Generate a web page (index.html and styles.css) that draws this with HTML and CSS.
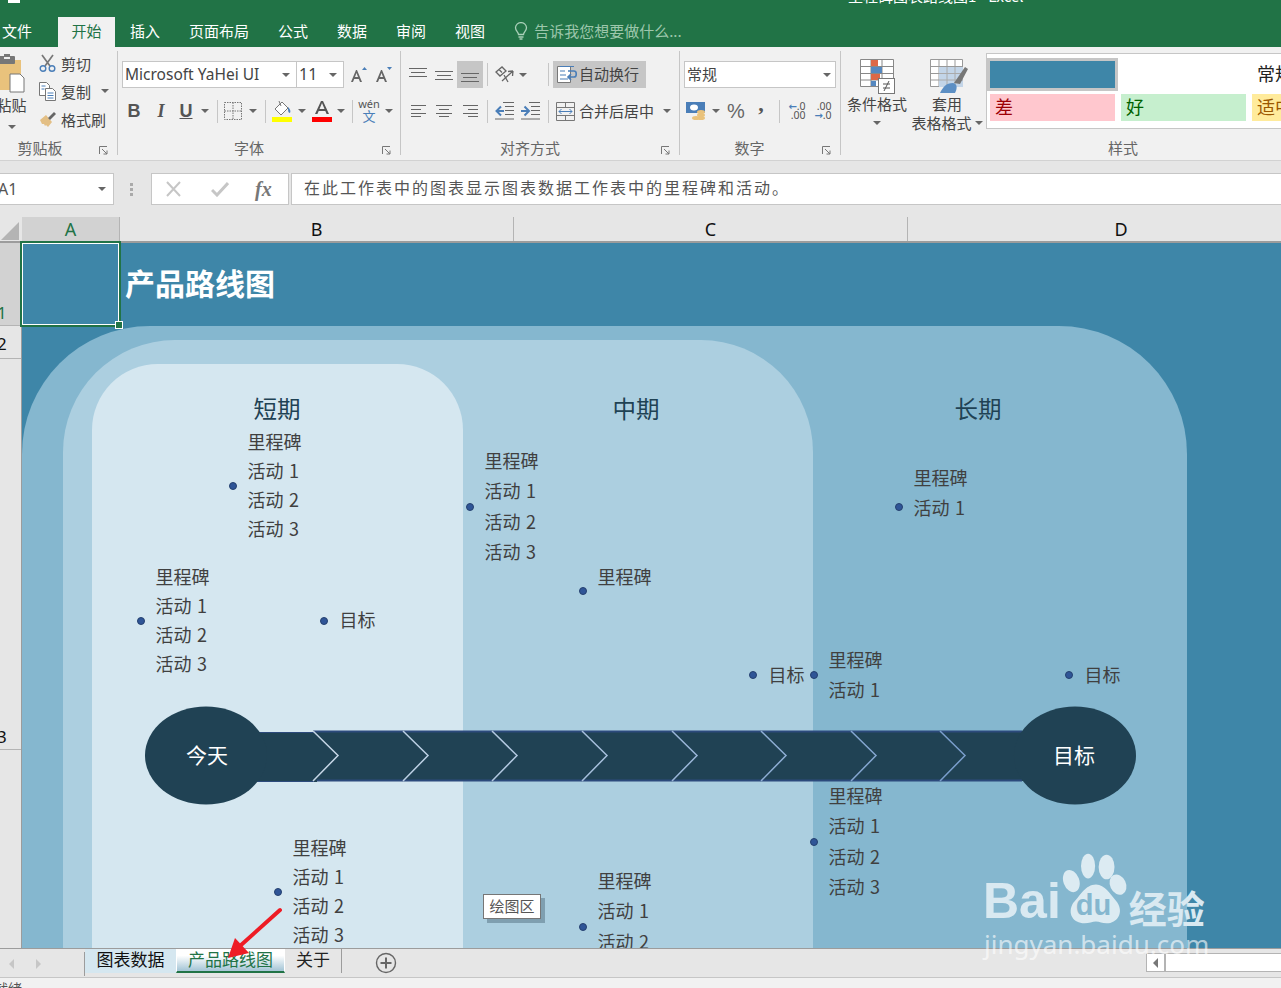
FILE: index.html
```html
<!DOCTYPE html>
<html lang="zh-CN">
<head>
<meta charset="utf-8">
<title>产品路线图 - Excel</title>
<link rel="stylesheet" href="styles.css">
</head>
<body>
<div class="app">
  <header class="titlebar"><span class="qa"></span><span class="doc-title">里程碑图表路线图1 - Excel</span></header>
  <nav class="tabs">
    <span class="tab file">文件</span><span class="tab on">开始</span><span class="tab">插入</span><span class="tab">页面布局</span><span class="tab">公式</span><span class="tab">数据</span><span class="tab">审阅</span><span class="tab">视图</span>
    <span class="tell">
      <svg width="14" height="18" viewBox="0 0 14 18" fill="none" stroke="#a9d0b8" stroke-width="1.3"><path d="M4.5 12.5C4.5 10 1.5 9 1.5 5.8a5.5 5.2 0 0 1 11 0C12.500 9 9.500 10 9.500 12.500z"/><path d="M4.500 15h5M5.500 17h3"/></svg>
      告诉我您想要做什么...
    </span>
  </nav>

  <section class="ribbon">
    <div class="group g-clip">
      <div class="clip-body">
        <div class="paste">
          <svg width="35" height="40" viewBox="0 0 35 40"><rect x="0" y="6" width="27" height="30" fill="#e9c27c"/><rect x="5" y="2" width="16" height="8" rx="1" fill="#777"/><rect x="10" y="0" width="6" height="4" fill="#777"/><rect x="10" y="3" width="6" height="2" fill="#eee"/><path d="M16 20h10l4 4v14H16z" fill="#fff" stroke="#777"/></svg>
          <span class="paste-t">粘贴</span>
          <i class="caret"></i>
        </div>
        <div class="clip-list">
          <div class="clip-row">
            <svg width="17" height="19" viewBox="0 0 17 19" fill="none"><path d="M3 1l8 11M14 1L6 12" stroke="#777" stroke-width="1.700"/><circle cx="4" cy="14.500" r="2.800" stroke="#4a7eb8" stroke-width="1.400"/><circle cx="13" cy="14.500" r="2.800" stroke="#4a7eb8" stroke-width="1.400"/></svg>
            <span class="clip-t">剪切</span>
          </div>
          <div class="clip-row">
            <svg width="17" height="19" viewBox="0 0 17 19" fill="#fff" stroke="#777"><path d="M.5.500h7l3 3v10H.5z"/><path d="M6.500 6.500h7l3 3v9h-10z"/><path d="M2.500 4h4M2.500 7h3M8.500 11h6M8.500 13.500h6M8.500 16h6" stroke="#4a7eb8"/></svg>
            <span class="clip-t">复制</span><i class="caret"></i>
          </div>
          <div class="clip-row">
            <svg width="17" height="17" viewBox="0 0 17 17"><path d="M1 9l6-5 6 7-4 5-2-2-1 1-1-2-2 0-1-2z" fill="#e3bf85"/><path d="M9 7l6-6 2 2-6 6z" fill="#666"/></svg>
            <span class="clip-t">格式刷</span>
          </div>
        </div>
      </div>
      <div class="glabel">剪贴板</div>
      <svg class="launch" width="9" height="9" viewBox="0 0 9 9" fill="none" stroke="#777"><path d="M.5 8V.5H8M3 3l5 5M8 4.500V8H4.500"/></svg>
    </div>

    <div class="group g-font">
      <div class="row1 font-r1">
        <span class="select fontname">Microsoft YaHei UI<i class="caret"></i></span>
        <span class="select fontsize">11<i class="caret"></i></span>
        <svg width="18" height="20" viewBox="0 0 18 20"><path d="M1 17L6 5h1l5 12h-2l-1.200-3H4.200L3 17zm4-5h3L6.500 8z" fill="#666"/><path d="M12 5l2.500-3L17 5z" fill="#4a7eb8"/></svg>
        <svg width="18" height="20" viewBox="0 0 18 20"><path d="M1 17L6 5h1l5 12h-2l-1.200-3H4.200L3 17zm4-5h3L6.500 8z" fill="#666"/><path d="M12 2h5l-2.500 3z" fill="#4a7eb8"/></svg>
      </div>
      <div class="row2 font-r2">
        <b class="fmt">B</b><i class="fmt">I</i><u class="fmt">U</u><i class="caret"></i><span class="sep"></span>
        <svg width="18" height="18" viewBox="0 0 18 18" fill="none" stroke="#777" stroke-dasharray="1.500 1"><path d="M.5.500h17v17H.5zM9 .5v17M.5 9h17"/></svg>
        <i class="caret"></i><span class="sep"></span>
        <svg width="20" height="23" viewBox="0 0 20 23"><path d="M3 9l7-7 6 6-7 7z" fill="#fff" stroke="#777"/><path d="M7 1l2 5" stroke="#777"/><path d="M16 7c2 2 3 4 2 6-2 0-2-3-2-6z" fill="#4a7eb8"/><rect y="17" width="20" height="5" fill="#ff0"/></svg>
        <i class="caret"></i>
        <svg width="20" height="23" viewBox="0 0 20 23"><path d="M3 14L9 1h2l6 13h-2.400l-1.300-3H6.700l-1.300 3zm4.500-5h5L10 3z" fill="#555"/><rect y="17" width="20" height="5" fill="#f00"/></svg>
        <i class="caret"></i><span class="sep"></span>
        <span class="wen"><span class="wen-a">wén</span><span class="wen-b">文</span></span>
        <i class="caret"></i>
      </div>
      <div class="glabel">字体</div>
      <svg class="launch" width="9" height="9" viewBox="0 0 9 9" fill="none" stroke="#777"><path d="M.5 8V.5H8M3 3l5 5M8 4.500V8H4.500"/></svg>
    </div>

    <div class="group g-align">
      <div class="row1 align-r1">
        <svg width="18" height="14" viewBox="0 0 18 14" stroke="#666"><path d="M0 .5h18M2 4.500h14M0 8.500h18"/></svg>
        <svg width="18" height="14" viewBox="0 0 18 14" stroke="#666"><path d="M0 3.500h18M2 7.500h14M0 11.500h18"/></svg>
        <span class="active-ic"><svg width="18" height="14" viewBox="0 0 18 14" stroke="#666"><path d="M0 5.500h18M2 9.500h14M0 13.500h18"/></svg></span>
        <span class="sep"></span>
        <svg width="20" height="19" viewBox="0 0 20 19" fill="none" stroke="#666" stroke-width="1.300"><path d="M1 7l6-5 4 4-6 5zM4 4.500l3 3M7 16L18 6M18 6l-5 .5M18 6l-.5 5"/><path d="M9 10l4 7" /></svg>
        <i class="caret"></i>
        <span></span><span class="sep"></span><span></span>
        <span class="btn-active"><svg width="20" height="19" viewBox="0 0 20 19" fill="none"><path d="M.5 1.500h13v16H.5z" fill="#fff" stroke="#777"/><path d="M3 1.500h14M3 6h5M3 10h6M3 14h8" stroke="#4a7eb8" stroke-width="1.200"/><path d="M11 6h6c3 0 3 6 0 6h-5M14 9l-3 3 3 3" stroke="#4a7eb8" stroke-width="1.600"/></svg><span class="btn-t">自动换行</span></span>
      </div>
      <div class="row2 align-r2">
        <svg width="15" height="12" viewBox="0 0 15 12" stroke="#666"><path d="M0 .5h15M0 4.500h10M0 8.500h15M0 11.500h10"/></svg>
        <svg width="16" height="12" viewBox="0 0 16 12" stroke="#666"><path d="M0 .5h16M3 4.500h10M0 8.500h16M3 11.500h10"/></svg>
        <svg width="15" height="12" viewBox="0 0 15 12" stroke="#666"><path d="M0 .5h15M5 4.500h10M0 8.500h15M5 11.500h10"/></svg>
        <span class="sep"></span>
        <svg width="19" height="18" viewBox="0 0 19 18" fill="none"><path d="M8 .5h11M10 4.500h9M10 8.500h9M10 12.500h9M0 17h19" stroke="#666"/><path d="M9 9H2M6 4.500L1.500 9 6 13.500" stroke="#4a7eb8" stroke-width="2"/></svg>
        <svg width="19" height="18" viewBox="0 0 19 18" fill="none"><path d="M8 .5h11M10 4.500h9M10 8.500h9M10 12.500h9M0 17h19" stroke="#666"/><path d="M0 9h7M3.500 4.500L8 9l-4.500 4.500" stroke="#4a7eb8" stroke-width="2"/></svg>
        <span></span><span class="sep"></span>
        <span class="merge"><svg width="19" height="19" viewBox="0 0 19 19" fill="none"><path d="M.5.500h18v18H.5zM.5 5.500h18M.5 13.500h18M9.500.5v5M9.500 13.500v5" stroke="#777"/><path d="M3 9.500h13M5.500 7L3 9.500 5.500 12M13.500 7L16 9.500 13.500 12" stroke="#4a7eb8"/></svg><span class="merge-t">合并后居中</span><i class="caret"></i></span>
      </div>
      <div class="glabel">对齐方式</div>
      <svg class="launch" width="9" height="9" viewBox="0 0 9 9" fill="none" stroke="#777"><path d="M.5 8V.5H8M3 3l5 5M8 4.500V8H4.500"/></svg>
    </div>

    <div class="group g-num">
      <div class="row1 num-r1"><span class="select numfmt">常规<i class="caret"></i></span></div>
      <div class="row2 num-r2">
        <svg width="20" height="20" viewBox="0 0 20 20"><rect y="1" width="19" height="11" fill="#4a7eb8"/><ellipse cx="8" cy="6.500" rx="4" ry="3" fill="#fff"/><ellipse cx="15" cy="11" rx="4" ry="2" fill="#e9c27c"/><ellipse cx="15" cy="14" rx="4" ry="2" fill="#e9c27c"/><ellipse cx="10" cy="17" rx="4" ry="2" fill="#e9c27c"/><ellipse cx="15" cy="17" rx="4" ry="2" fill="#e9c27c"/></svg>
        <i class="caret"></i>
        <span class="pct">%</span>
        <span class="comma">,</span>
        <span class="sep"></span>
        <span class="dec"><span><em class="arr">←</em>.0</span><span>.00</span></span>
        <span class="dec"><span>.00</span><span><em class="arr">→</em>.0</span></span>
      </div>
      <div class="glabel">数字</div>
      <svg class="launch" width="9" height="9" viewBox="0 0 9 9" fill="none" stroke="#777"><path d="M.5 8V.5H8M3 3l5 5M8 4.500V8H4.500"/></svg>
    </div>

    <div class="group g-style">
      <div class="style-body">
        <div class="big cond">
          <svg width="35" height="35" viewBox="0 0 35 35"><path d="M.5.500h33v27H.5zM11 .5v27M22 .5v27M.5 7.500h33M.5 14.500h33M.5 21h33" fill="#fff" stroke="#888"/><rect x="11" y="1" width="7" height="6" fill="#dd6846"/><rect x="11" y="8" width="11" height="6" fill="#5588c0"/><rect x="11" y="15" width="9" height="6" fill="#dd6846"/><rect x="11" y="22" width="5" height="5" fill="#5588c0"/><rect x="18.500" y="19.500" width="16" height="15" fill="#fff" stroke="#777"/><path d="M23 25h7M23 29h7M29 22l-5 10" stroke="#555" fill="none"/></svg>
          <span class="big-t">条件格式</span>
          <i class="caret"></i>
        </div>
        <div class="big table">
          <svg width="38" height="35" viewBox="0 0 38 35"><path d="M.5.500h32v27H.5zM9 .5v27M17 .5v27M25 .5v27M.5 7.500h32M.5 14.500h32M.5 21h32" fill="#fff" stroke="#999"/><rect x="9" y="8" width="24" height="20" fill="#c3d5e8"/><path d="M9 14.500h24M9 21h24M17 8v20M25 8v20" stroke="#aaa"/><path d="M24 24L35 8l3 2-8 15z" fill="#777"/><path d="M10 34c3-6 6-10 13-10 5 1 4 6 2 10z" fill="#5c8fc4"/></svg>
          <span class="big-t">套用</span>
          <span class="big-t">表格格式<i class="caret"></i></span>
        </div>
        <div class="gallery">
          <span class="cell cell-sel"></span><span class="cell"></span><span class="cell c-normal">常规</span>
          <span class="cell c-bad">差</span><span class="cell c-good">好</span><span class="cell c-mid">适中</span>
        </div>
      </div>
      <div class="glabel">样式</div>
    </div>
  </section>

  <section class="formula">
    <span class="namebox">A1<i class="caret"></i></span>
    <span class="grip"></span>
    <span class="fxbox">
      <svg width="18" height="16" viewBox="0 0 18 16" fill="none" stroke="#c6c6c6" stroke-width="2"><path d="M2 1l13 14M15 1L2 15"/></svg>
      <svg width="18" height="16" viewBox="0 0 18 16" fill="none" stroke="#c6c6c6" stroke-width="3"><path d="M1 9l5 5L17 2"/></svg>
      <em class="fx">fx</em>
    </span>
    <span class="fbar">在此工作表中的图表显示图表数据工作表中的里程碑和活动。</span>
  </section>

  <div class="colhead">
    <span class="corner"><svg width="18" height="18" viewBox="0 0 18 18"><path d="M18 0v18H0z" fill="#b4b4b4"/></svg></span>
    <span class="col col-a">A</span><span class="col">B</span><span class="col">C</span><span class="col col-d">D</span>
  </div>

  <div class="sheet">
    <aside class="rowhead">
      <span class="rh rh1">1</span><span class="rh rh2">2</span><span class="rh rh3">3</span>
    </aside>
    <main class="canvas">
      <h1 class="title">产品路线图</h1>
      <div class="arch a-long"></div>
      <div class="arch a-mid"></div>
      <div class="arch a-short"></div>
      <h2 class="phase p1">短期</h2><h2 class="phase p2">中期</h2><h2 class="phase p3">长期</h2>

      <div class="node n1"><i class="dot"></i><div class="lines l29"><div>里程碑</div><div>活动 1</div><div>活动 2</div><div>活动 3</div></div></div>
      <div class="node n2"><i class="dot"></i><div class="lines l29"><div>里程碑</div><div>活动 1</div><div>活动 2</div><div>活动 3</div></div></div>
      <div class="node n3 wide"><i class="dot"></i><div class="lines l29"><div>目标</div></div></div>
      <div class="node n4"><i class="dot"></i><div class="lines l30"><div>里程碑</div><div>活动 1</div><div>活动 2</div><div>活动 3</div></div></div>
      <div class="node n5"><i class="dot"></i><div class="lines l30 raised"><div>里程碑</div></div></div>
      <div class="node n6 wide"><i class="dot"></i><div class="lines l30"><div>目标</div></div></div>
      <div class="node n7"><i class="dot"></i><div class="lines l30"><div>里程碑</div><div>活动 1</div></div></div>
      <div class="node n8"><i class="dot"></i><div class="lines l30"><div>里程碑</div><div>活动 1</div></div></div>
      <div class="node n9 wide"><i class="dot"></i><div class="lines l30"><div>目标</div></div></div>
      <div class="node n10"><i class="dot"></i><div class="lines l30"><div>里程碑</div><div>活动 1</div><div>活动 2</div><div>活动 3</div></div></div>
      <div class="node n11"><i class="dot"></i><div class="lines l29"><div>里程碑</div><div>活动 1</div><div>活动 2</div><div>活动 3</div></div></div>
      <div class="node n12"><i class="dot"></i><div class="lines l30"><div>里程碑</div><div>活动 1</div><div>活动 2</div><div>活动 3</div></div></div>

      <svg class="timeline" width="1259" height="120" viewBox="0 0 1259 120">
        <rect x="220" y="26" width="800" height="49" fill="#204254"/>
        <path d="M291 25.500H1000M291 74.500H1000" stroke="#2c4a7c" stroke-width="2"/>
        <rect x="220" y="27" width="75" height="49" fill="#204254"/>
        <path d="M220 26.500H292M220 75.500H292" stroke="#2c4a7c"/>
        <g fill="none" stroke-width="1.500">
          <path d="M291 25l25 24.500L291 75" stroke="#c6d6e6"/>
          <path d="M381 25l25 24.500L381 75" stroke="#bcd0e4"/>
          <path d="M470 25l25 24.500L470 75" stroke="#b2c8e0"/>
          <path d="M560 25l25 24.500L560 75" stroke="#a6bfdc"/>
          <path d="M650 25l25 24.500L650 75" stroke="#9ab6d8"/>
          <path d="M739 25l25 24.500L739 75" stroke="#8eaed4"/>
          <path d="M829 25l25 24.500L829 75" stroke="#84a6d0"/>
          <path d="M918 25l25 24.500L918 75" stroke="#7a9ecc"/>
        </g>
        <ellipse cx="184" cy="49.500" rx="61" ry="49" fill="#204254"/>
        <ellipse cx="1053" cy="49.500" rx="61" ry="49" fill="#204254"/>
        <text class="tl-text" x="185" y="57" text-anchor="middle">今天</text>
        <text class="tl-text" x="1052" y="57" text-anchor="middle">目标</text>
      </svg>

      <div class="tip">绘图区</div>
    </main>
  </div>

  <footer class="tabbar">
    <span class="nav"><i class="tri tri-l"></i><i class="tri tri-r"></i></span>
    <span class="sheet-tab st1">图表数据</span>
    <span class="sheet-tab st2">产品路线图</span>
    <span class="sheet-tab st3">关于</span>
    <span class="add"><svg width="22" height="22" viewBox="0 0 22 22" fill="none" stroke="#666" stroke-width="1.400"><circle cx="11" cy="11" r="9.500"/><path d="M11 5.500v11M5.500 11h11" stroke-width="2"/></svg></span>
    <span class="grip grip-b"></span>
    <span class="hscroll"><span class="hbtn"><i class="tri tri-l dark"></i></span><span class="htrack"></span></span>
  </footer>
  <div class="status">就绪</div>

  <div class="selected"></div>

  <svg class="arrow" width="70" height="60" viewBox="0 0 70 60"><path d="M58 5L18 41" stroke="#ee1c25" stroke-width="4" stroke-linecap="round"/><path d="M6 53l7-20 14 15z" fill="#ee1c25"/></svg>

  <div class="watermark">
    <div class="wm-top">
      <span class="wm-bai">Bai</span>
      <span class="wm-paw">
        <svg width="68" height="74" viewBox="0 0 76 84"><g fill="#dcebf2"><ellipse cx="10" cy="33" rx="9" ry="13" transform="rotate(-20 10 33)"/><ellipse cx="29" cy="16" rx="8" ry="14"/><ellipse cx="50" cy="17" rx="9" ry="14"/><ellipse cx="63" cy="37" rx="9" ry="12" transform="rotate(-25 63 37)"/><path d="M38 37c10 0 16 11 24 20 8 12 0 24-12 24-5 0-8-2-12-2s-8 2-13 2C12 81 5 70 12 58c8-8 14-21 26-21z"/></g></svg>
        <span class="wm-du">du</span>
      </span>
      <span class="wm-cn">经验</span>
    </div>
    <div class="wm-url">jingyan.baidu.com</div>
  </div>
</div>
</body>
</html>
```
FILE: styles.css
```css
* { box-sizing: border-box; }
html, body { margin: 0; padding: 0; }
body { width: 1281px; height: 988px; overflow: hidden; }
.app {
  position: relative; width: 1281px; height: 988px; overflow: hidden;
  display: flex; flex-direction: column;
  font-family: "Noto Sans CJK SC", "Noto Sans", sans-serif;
  font-size: 15px; color: #444; background: #e6e6e6;
}
em { font-style: normal; }

/* title + tabs */
.titlebar { height: 17px; flex: none; background: #217346; position: relative; overflow: hidden; display: flex; }
.qa { width: 12px; height: 3px; margin-left: 8px; background: #fff; }
.doc-title { margin-left: 828px; margin-top: -14px; line-height: 20px; font-size: 15px; color: #fff; white-space: nowrap; }
.tabs { height: 30px; flex: none; background: #217346; display: flex; align-items: stretch; gap: 1px; margin-left: -12px; color: #fff; font-size: 15px; line-height: 27px; }
.tab { padding: 0 14px; }
.tab.on { background: #f1f1f1; color: #217346; padding: 0 13.500px; margin-left: 11px; }
.tell { display: flex; align-items: center; gap: 6px; margin-left: 14px; color: #9dc7ac; line-height: 28px; height: 28px; }

/* ribbon */
.ribbon { height: 114px; flex: none; display: flex; align-items: flex-start; background: #f1f1f1; border-bottom: 1px solid #d2d2d2; overflow: hidden; }
.group { position: relative; height: 104px; margin-top: 4px; display: flex; flex-direction: column; border-right: 1px solid #c6c6c6; flex: none; }
.glabel { margin-top: auto; line-height: 14px; font-size: 15px; text-align: center; color: #666; padding-right: 24px; }
.launch { position: absolute; right: 9px; bottom: 0; }
.g-clip { width: 118px; }
.g-clip .glabel { padding-right: 37px; }
.g-font { width: 283px; padding-left: 4px; }
.g-align { width: 279px; padding-left: 4px; }
.g-num { width: 161px; padding-left: 3px; }
.g-style { width: 440px; border-right: 0; }
.g-style .glabel { padding: 0 0 0 124px; }
.caret { display: inline-block; width: 0; height: 0; border: 4px solid transparent; border-top-color: #666; border-bottom: 0; }
.sep { display: block; width: 1px; height: 23px; background: #c6c6c6; justify-self: center; }
.row1 { margin-top: 10px; height: 27px; display: grid; align-items: center; justify-items: center; }
.row2 { margin-top: 10px; height: 26px; display: grid; align-items: center; justify-items: center; }

/* clipboard */
.clip-body { display: flex; }
.paste { width: 31px; margin-left: -4px; margin-top: 3px; display: flex; flex-direction: column; align-items: center; flex: none; }
.paste-t { font-size: 15px; line-height: 20px; margin-top: 1px; white-space: nowrap; }
.paste .caret { margin-top: 10px; }
.clip-list { margin-left: 12px; margin-top: -2px; }
.clip-row { height: 28px; display: flex; align-items: center; gap: 5px; white-space: nowrap; }
.clip-row svg { flex: none; }
.clip-row .caret { margin-left: 5px; }
.clip-t { margin-top: 0; }

/* font group */
.font-r1 { grid-template-columns: 175px 47px 6px 18px 7px 18px; justify-items: stretch; }
.font-r1 svg:nth-of-type(1) { grid-column: 4; }
.font-r1 svg:nth-of-type(2) { grid-column: 6; }
.select { height: 27px; display: flex; align-items: center; justify-content: space-between; background: #fff; border: 1px solid #c6c6c6; padding: 0 6px 2px 2px; white-space: nowrap; color: #444; }
.select .caret { margin-top: 2px; }
.fontname { font-family: "Noto Sans", sans-serif; font-size: 15.500px; }
.fontsize { margin-left: -1px; font-family: "Noto Sans", sans-serif; font-size: 16px; }
.font-r2 { grid-template-columns: 24px 30px 20px 18px 6px 26px 14px 10px 24px 16px 24px 14px 8px 26px 14px; }
.fmt { font-family: "Liberation Serif", serif; color: #555; font-size: 18px; line-height: 20px; }
b.fmt { font-family: "Liberation Sans", sans-serif; }
i.fmt { font-weight: bold; }
u.fmt { font-family: "Liberation Sans", sans-serif; font-weight: bold; }
.wen { display: flex; flex-direction: column; align-items: center; margin-top: -2px; }
.wen-a { font-size: 11px; line-height: 11px; color: #555; font-family: "Noto Sans", sans-serif; }
.wen-b { font-size: 13px; line-height: 13px; color: #4a7eb8; }

/* alignment */
.align-r1 { grid-template-columns: 26px 26px 26px 8px 27px 10px 17px 6px 2px 93px; }
.align-r2 { grid-template-columns: 26px 26px 26px 8px 26px 26px 2px 6px 128px; }
.active-ic { width: 26px; height: 27px; background: #c6c6c6; display: flex; align-items: center; justify-content: center; }
.btn-active { width: 93px; height: 27px; background: #c6c6c6; display: flex; align-items: center; gap: 2px; padding-left: 4px; white-space: nowrap; font-size: 15px; }
.btn-t { margin-bottom: 2px; }
.merge { justify-self: start; display: flex; align-items: center; margin-left: 5px; white-space: nowrap; }
.merge-t { margin-left: 4px; margin-bottom: 2px; }
.merge .caret { margin-left: 9px; }

/* number */
.num-r1 { grid-template-columns: 152px; margin-left: 1px; justify-items: stretch; }
.numfmt { font-size: 15px; padding-right: 4px; }
.num-r2 { grid-template-columns: 24px 16px 24px 26px 10px 26px 26px; margin-left: 1px; }
.pct { font-family: "Liberation Sans", sans-serif; font-size: 20px; color: #666; }
.comma { font-family: "Liberation Serif", serif; font-weight: bold; font-size: 22px; line-height: 16px; color: #555; margin-top: -14px; }
.dec { display: flex; flex-direction: column; align-items: flex-end; font-family: "Noto Sans", sans-serif; font-size: 10.500px; line-height: 9px; color: #555; }
.arr { color: #4a7eb8; font-weight: bold; font-family: "DejaVu Sans", sans-serif; font-size: 10px; }

/* styles */
.style-body { display: flex; align-items: flex-start; }
.big { display: flex; flex-direction: column; align-items: center; white-space: nowrap; font-size: 15px; line-height: 19px; }
.big svg { margin-top: 8px; margin-bottom: 0; }
.big-t { display: flex; align-items: center; gap: 3px; }
.cond { width: 60px; margin-left: 6px; }
.cond .caret { margin-top: 8px; }
.table { width: 64px; margin-left: 8px; }
.table svg { margin-left: 4px; }
.table .big-t:last-child { margin-left: 0; }
.gallery { width: 420px; height: 76px; margin-left: 7px; margin-top: 2px; flex: none; background: #fff; border: 1px solid #c6c6c6; border-right: 0; padding: 7px 0 0 3px; display: grid; grid-template-columns: 125px 125px 125px; grid-template-rows: 27px 27px; gap: 6px; overflow: hidden; }
.cell { padding-left: 5px; font-size: 18px; line-height: 24px; white-space: nowrap; }
.cell-sel { background: #3e86a8; outline: 3px solid #c6c6c6; }
.c-normal { color: #222; }
.c-bad { background: #ffc7ce; color: #9c0006; }
.c-good { background: #c6efce; color: #006100; }
.c-mid { background: #ffeb9c; color: #9c5700; }

/* formula */
.formula { height: 56px; flex: none; display: flex; align-items: center; padding-top: 0; background: #e6e6e6; }
.namebox { width: 116px; height: 32px; margin-left: -2px; background: #fff; border: 1px solid #c6c6c6; border-left: 0; display: flex; align-items: center; justify-content: space-between; padding-right: 7px; font-family: "Noto Sans", sans-serif; font-size: 16px; color: #555; }
.grip { width: 3px; height: 13px; margin-left: 16px; background: repeating-linear-gradient(#aaa 0 3px, transparent 3px 5px); }
.fxbox { width: 138px; height: 32px; margin-left: 18px; background: #fff; border: 1px solid #c6c6c6; display: flex; align-items: center; padding-left: 13px; gap: 28px; }
.fx { font-family: "Liberation Serif", serif; font-style: italic; font-weight: bold; font-size: 20px; color: #777; margin-left: -2px; }
.fbar { flex: 1; height: 32px; margin-left: 2px; background: #fff; border: 1px solid #c6c6c6; border-right: 0; padding-left: 12px; line-height: 27px; font-size: 16px; letter-spacing: 2px; color: #555; white-space: nowrap; }

/* column head */
.colhead { height: 26px; flex: none; display: grid; grid-template-columns: 22px 98px 394px 394px 426px; border-bottom: 2px solid #9c9c9c; overflow: hidden; background: #e6e6e6; }
.corner { display: flex; align-items: flex-end; justify-content: flex-start; padding: 0 0 1px 1px; }
.col { text-align: center; font-family: "Noto Sans", sans-serif; font-size: 18px; line-height: 24px; color: #111; border-right: 1px solid #b4b4b4; }
.col-a { background: #d2d2d2; color: #217346; }
.col-d { border-right: 0; }

/* sheet */
.sheet { height: 705px; flex: none; display: flex; overflow: hidden; }
.rowhead { width: 22px; flex: none; display: flex; flex-direction: column; border-right: 1px solid #9c9c9c; background: #e6e6e6; font-family: "Noto Sans", sans-serif; font-size: 17px; color: #111; overflow: hidden; }
.rh { display: flex; align-items: flex-end; border-bottom: 1px solid #b4b4b4; text-indent: -3px; line-height: 25px; flex: none; }
.rh1 { height: 83px; background: #d2d2d2; color: #217346; }
.rh2 { height: 33px; padding-bottom: 2px; }
.rh3 { height: 391px; padding-bottom: 0; }
.canvas { position: relative; flex: 1; background: #3e86a8; overflow: hidden; }
.selected { position: absolute; left: 20px; top: 241px; width: 101px; height: 86px; border: 2px solid #217346; box-shadow: inset 0 0 0 1px #fff; }
.selected::after { content: ""; position: absolute; right: -4px; bottom: -4px; width: 6px; height: 6px; background: #217346; border: 1px solid #fff; }
.title { position: absolute; left: 103px; top: 16px; margin: 0; font-size: 30px; line-height: 46px; font-weight: 700; color: #fff; white-space: nowrap; }
.arch { position: absolute; height: 800px; }
.a-long { left: 0; top: 83px; width: 1165px; background: #85b7cf; border-radius: 128px 128px 0 0; }
.a-mid { left: 41px; top: 97px; width: 750px; background: #accfe0; border-radius: 112px 112px 0 0; }
.a-short { left: 70px; top: 121px; width: 371px; background: #d5e7f0; border-radius: 66px 66px 0 0; }
.phase { position: absolute; top: 148px; margin: 0; font-size: 23.500px; line-height: 34px; font-weight: 400; color: #1f4254; white-space: nowrap; transform: translateX(-50%); }
.p1 { left: 255px; }
.p2 { left: 614px; }
.p3 { left: 956px; }
.node { position: absolute; display: flex; align-items: center; gap: 10.500px; font-size: 18px; color: #404040; white-space: nowrap; }
.node.wide { gap: 11.500px; }
.dot { width: 8px; height: 8px; flex: none; border-radius: 50%; background: #2f5597; border: 1px solid #24406f; }
.lines { margin-bottom: 2px; word-spacing: 1.500px; }
.l29 { line-height: 29px; }
.l30 { line-height: 30.330px; }
.lines.raised { margin-bottom: 0; padding-bottom: 30px; }
.n1 { left: 207px; top: 183.500px; }
.n2 { left: 115px; top: 318.500px; }
.n3 { left: 298px; top: 362px; }
.n4 { left: 444px; top: 202px; }
.n5 { left: 557px; top: 317.500px; }
.n6 { left: 727px; top: 416px; }
.n7 { left: 788px; top: 401px; }
.n8 { left: 873px; top: 219px; align-items: flex-end; }
.n8 .dot { margin-bottom: 14px; }
.n9 { left: 1043px; top: 416px; }
.n10 { left: 788px; top: 537px; }
.n11 { left: 252px; top: 589.500px; }
.n12 { left: 557px; top: 622px; }
.timeline { position: absolute; left: 0; top: 463px; }
.tl-text { font-size: 21px; fill: #fff; }
.tip { position: absolute; left: 461px; top: 651px; width: 58px; height: 25px; background: #fff; border: 1px solid #767676; box-shadow: 4px 4px 0 #7f9fb0; font-size: 15px; line-height: 22px; text-align: center; color: #555; }

/* sheet tabs */
.tabbar { height: 30px; flex: none; background: #e6e6e6; border-top: 1px solid #9c9c9c; display: flex; align-items: flex-start; position: relative; border-bottom: 1px solid #c6c6c6; }
.nav { width: 85px; height: 24px; display: flex; align-items: center; gap: 22px; padding-left: 9px; border-right: 1px solid #9c9c9c; margin-top: 3px; flex: none; }
.tri { display: block; width: 0; height: 0; border: 5px solid transparent; }
.tri-l { border-right-color: #c6c6c6; border-left: 0; }
.tri-r { border-left-color: #c6c6c6; border-right: 0; }
.tri.dark { border-right-color: #777; }
.sheet-tab { height: 24px; font-size: 17px; line-height: 19px; text-align: center; color: #222; flex: none; }
.st1 { width: 91px; background: #d5e7f0; color: #111; }
.st2 { width: 109px; background: linear-gradient(#fff 30%, #a9c8d8 95%); color: #217346; border-bottom: 2px solid #217346; border-left: 1px solid #fff; border-right: 1px solid #fff; }
.st3 { width: 57px; height: 24px; border-right: 1px solid #9c9c9c; text-align: left; padding-left: 11px; margin-top: 0; }
.add { margin-left: 33px; margin-top: 3px; flex: none; display: block; line-height: 0; }
.grip-b { margin-left: 733px; margin-top: 6px; }
.hscroll { display: flex; margin-left: 16px; margin-top: 4px; height: 19px; flex: none; }
.hbtn { width: 19px; height: 19px; background: #fff; border: 1px solid #b4b4b4; display: flex; align-items: center; justify-content: center; }
.htrack { width: 120px; height: 19px; background: #fff; border: 1px solid #b4b4b4; border-left: 1px solid #b4b4b4; }
.status { flex: 1; background: #f1f1f1; font-size: 14px; line-height: 18px; margin-left: -6px; padding-top: 1px; color: #555; overflow: hidden; }

/* overlays */
.arrow { position: absolute; left: 222px; top: 905px; }
.watermark { position: absolute; left: 983px; top: 852px; width: 240px; color: rgba(255,255,255,.72); pointer-events: none; }
.wm-top { display: flex; align-items: flex-end; height: 74px; }
.wm-bai { font-family: "Liberation Sans", sans-serif; font-weight: 700; font-size: 50px; line-height: 50px; color: #d9e9f1; margin-bottom: 0; letter-spacing: 0; }
.wm-paw { position: relative; width: 68px; height: 74px; margin-left: 1px; flex: none; }
.wm-du { position: absolute; left: 14px; top: 37px; font-family: "Liberation Sans", sans-serif; font-weight: 700; font-size: 29px; line-height: 32px; color: #85b7cf; }
.wm-cn { font-size: 38px; font-weight: 700; line-height: 44px; color: #d9e9f1; margin-bottom: -3px; margin-left: -1px; white-space: nowrap; }
.wm-url { font-family: "Noto Sans", sans-serif; font-size: 26px; line-height: 30px; color: rgba(255,255,255,.62); white-space: nowrap; margin-top: 3px; margin-left: 1px; letter-spacing: 0; }
```
